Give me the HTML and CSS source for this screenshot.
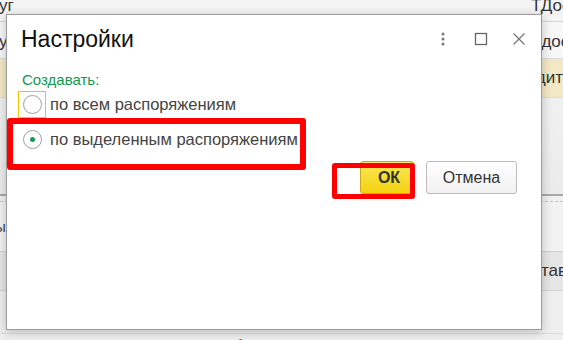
FILE: index.html
```html
<!DOCTYPE html>
<html lang="ru">
<head>
    <meta charset="UTF-8">
    <title>Настройки</title>
    <link rel="stylesheet" href="styles.css">
</head>
<body>
    <div class="page">
        <div class="form-bg">
            <div class="row row-1">
                <span class="cell-left">уг</span>
                <span class="cell-right">ТДос</span>
            </div>
            <div class="row row-2">
                <span class="cell-left">у</span>
                <span class="cell-right">Тдос</span>
            </div>
            <div class="row row-3">
                <span class="cell-left"></span>
                <span class="cell-right">Кредит</span>
            </div>
            <div class="row row-4"></div>
            <div class="row row-5"></div>
            <div class="row row-6">
                <span class="cell-left cell-blue">ы</span>
            </div>
            <div class="row row-7">
                <span class="cell-left"></span>
                <span class="cell-right">тав</span>
            </div>
            <div class="row row-8">
                <div class="footer-line">
                    <span class="f-1">Д</span>
                    <span class="f-2">Иван Тарб</span>
                    <span class="f-3">10.05.2017</span>
                </div>
            </div>
        </div>

        <div class="dialog">
            <div class="dlg-head">
                <h1 class="dlg-title">Настройки</h1>
                <div class="dlg-tools">
                    <svg class="tool" width="14" height="14" viewBox="0 0 14 14">
                        <circle cx="7" cy="2" r="1.5" fill="#777"/>
                        <circle cx="7" cy="7" r="1.5" fill="#777"/>
                        <circle cx="7" cy="12" r="1.5" fill="#777"/>
                    </svg>
                    <svg class="tool" width="14" height="14" viewBox="0 0 14 14">
                        <rect x="1.5" y="1.5" width="11" height="11" fill="none" stroke="#666" stroke-width="1.3"/>
                    </svg>
                    <svg class="tool" width="14" height="14" viewBox="0 0 14 14">
                        <path d="M1.5 1.5 L12.5 12.5 M12.5 1.5 L1.5 12.5" stroke="#777" stroke-width="1.3"/>
                    </svg>
                </div>
            </div>

            <div class="dlg-body">
                <div class="group-label">Создавать:</div>
                <label class="radio-row">
                    <span class="radio-focus"><span class="radio"></span></span>
                    <span class="radio-text">по всем распоряжениям</span>
                </label>
                <label class="radio-row">
                    <span class="radio-box"><span class="radio checked"></span></span>
                    <span class="radio-text">по выделенным распоряжениям</span>
                </label>
            </div>

            <div class="dlg-buttons">
                <button class="btn btn-ok">ОК</button>
                <button class="btn btn-cancel">Отмена</button>
            </div>
        </div>

        <div class="mark mark-radio"></div>
        <div class="mark mark-ok"></div>
    </div>
</body>
</html>
```

FILE: styles.css
```css
body {
    margin: 0;
    font-family: "Liberation Sans", Arial, sans-serif;
    background: #f0f0f0;
}

.page {
    position: relative;
    width: 563px;
    height: 340px;
    overflow: hidden;
}

/* форма на заднем плане */
.form-bg {
    display: flex;
    flex-direction: column;
    height: 340px;
}

.row {
    display: flex;
    justify-content: space-between;
    overflow: hidden;
    font-size: 17px;
    color: #333;
}

.cell-left {
    margin-left: -1px;
}

.cell-right {
    width: 32px;
    white-space: nowrap;
}

.cell-blue {
    color: #34477a;
    margin-left: -5px;
}

.row-1 {
    height: 21px;
    background: #f4f4f4;
    border-bottom: 1px solid #d6d6d6;
    align-items: flex-end;
    line-height: 30px;
}

.row-1 .cell-left,
.row-1 .cell-right {
    margin-top: -12px;
}

.row-2 {
    height: 37px;
    background: #f7f7f7;
    border-bottom: 1px solid #dadada;
    align-items: center;
    padding-top: 4px;
    box-sizing: border-box;
}

.row-3 {
    height: 38px;
    background: #f3e8c6;
    border-bottom: 1px solid #dcdcdc;
    align-items: center;
}

.row-3 .cell-right {
    width: 22px;
    direction: rtl;
    text-align: left;
}

.row-4 {
    height: 96px;
    background: linear-gradient(#f1f1f1, #ebebeb);
    border-bottom: 2px solid #a9a9a9;
}

.row-5 {
    height: 5px;
    background: #f0f0f0;
    border-bottom: 1px dashed #c6c6c6;
}

.row-6 {
    height: 49px;
    background: #f2f2f2;
    border-bottom: 1px solid #cfcfcf;
    align-items: center;
    font-size: 15px;
}

.row-7 {
    height: 38px;
    background: #e6e6e6;
    border-bottom: 1px solid #d2d2d2;
    align-items: center;
}

.row-7 .cell-right {
    width: 22px;
}

.row-8 {
    flex: 1;
    background: #efefef;
    flex-direction: column;
    justify-content: flex-end;
}

.footer-line {
    display: flex;
    height: 6px;
    border-top: 1px solid #dcdcdc;
    line-height: 26px;
    font-size: 17px;
    color: #222;
    overflow: hidden;
}

.f-1 { margin-left: 8px; width: 152px; }
.f-2 { width: 224px; }

/* диалог */
.dialog {
    position: absolute;
    left: 6px;
    top: 14px;
    width: 534px;
    height: 314px;
    background: #fff;
    border: 1px solid #9c9c9c;
    box-shadow: 0 2px 10px rgba(0, 0, 0, 0.22);
    display: flex;
    flex-direction: column;
}

.dlg-head {
    display: flex;
    align-items: center;
    justify-content: space-between;
    height: 48px;
    padding: 0 15px 0 14px;
}

.dlg-title {
    margin: 0;
    font-size: 23px;
    font-weight: normal;
    color: #111;
}

.dlg-tools {
    display: flex;
    align-items: center;
    gap: 24px;
}

.dlg-body {
    padding: 8px 14px 0 11px;
}

.group-label {
    color: #12994a;
    font-size: 15px;
    line-height: 18px;
    margin-bottom: 6px;
    margin-left: 4px;
}

.radio-row {
    display: flex;
    align-items: center;
    gap: 4px;
    height: 18px;
    margin-bottom: 17px;
    font-size: 16.5px;
    color: #444;
}

.radio-focus,
.radio-box {
    box-sizing: border-box;
    display: flex;
    align-items: center;
    justify-content: center;
    width: 28px;
    height: 27px;
    border: 1px solid transparent;
    flex: none;
}

.radio-focus {
    border-color: #f1c400;
}

.radio {
    box-sizing: border-box;
    width: 19px;
    height: 19px;
    border: 1px solid #9f9f9f;
    border-radius: 50%;
    background: #fff;
    position: relative;
}

.radio.checked::after {
    content: "";
    position: absolute;
    left: 6px;
    top: 6px;
    width: 5px;
    height: 5px;
    border-radius: 50%;
    background: #169a4c;
}

.dlg-buttons {
    display: flex;
    justify-content: flex-end;
    gap: 12px;
    padding: 0 24px 0 0;
    margin-top: -4px;
}

.btn {
    height: 33px;
    border-radius: 3px;
    font-family: inherit;
    font-size: 16px;
    color: #333;
    cursor: pointer;
}

.btn-ok {
    width: 54px;
    font-weight: bold;
    background: linear-gradient(#fbe75a, #f3d20f);
    border: 1px solid #c9aa1c;
    padding-left: 10px;
}

.btn-cancel {
    width: 91px;
    background: linear-gradient(#ffffff, #f1f1f1);
    border: 1px solid #bcbcbc;
}

/* красные пометки */
.mark {
    position: absolute;
    border: 6px solid #ff0000;
    border-radius: 3px;
    box-sizing: border-box;
}

.mark-radio {
    left: 7px;
    top: 118px;
    width: 299px;
    height: 52px;
}

.mark-ok {
    left: 332px;
    top: 163px;
    width: 83px;
    height: 36px;
    border-width: 5px;
}
```
